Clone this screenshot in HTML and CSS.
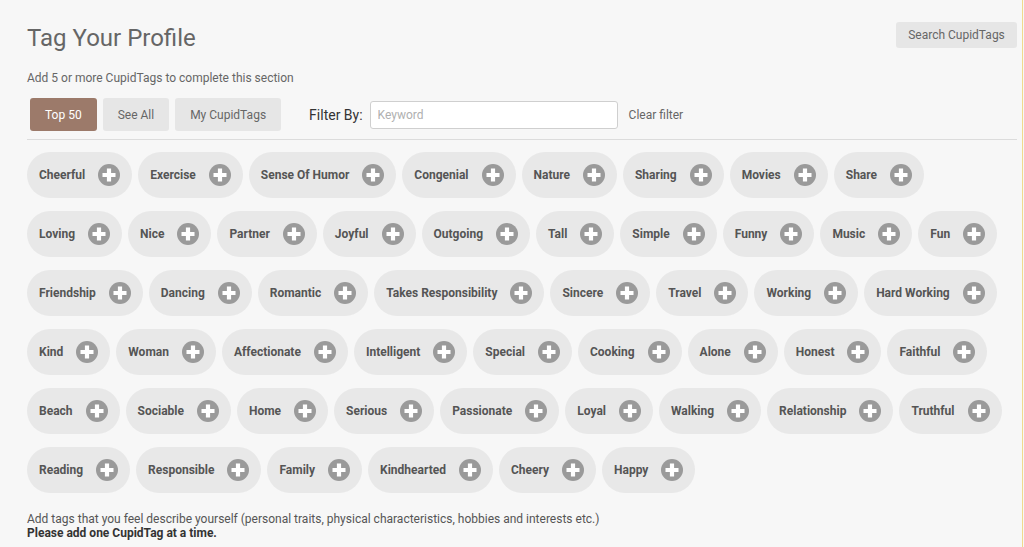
FILE: index.html
```html
<!DOCTYPE html>
<html>
<head>
<meta charset="utf-8">
<link rel="stylesheet" href="styles.css">
</head>
<body>
<div class="page">
  <div class="head">
    <div class="head-text">
      <h1 class="title">Tag Your Profile</h1>
      <p class="sub">Add 5 or more CupidTags to complete this section</p>
    </div>
    <button class="btn btn-search">Search CupidTags</button>
  </div>
  <div class="toolbar">
    <button class="btn btn-tab active">Top 50</button>
    <button class="btn btn-tab">See All</button>
    <button class="btn btn-tab">My CupidTags</button>
    <span class="filter-label">Filter By:</span>
    <input class="filter-input" type="text" placeholder="Keyword">
    <span class="clear">Clear filter</span>
  </div>
  <div class="tags" id="tags"></div>
  <div class="foot">
    <p>Add tags that you feel describe yourself (personal traits, physical characteristics, hobbies and interests etc.)</p>
    <p class="strong">Please add one CupidTag at a time.</p>
  </div>
</div>
<script src="script.js"></script>
</body>
</html>
```
FILE: script.js
```js
var tags = ["Cheerful","Exercise","Sense Of Humor","Congenial","Nature","Sharing","Movies","Share",
"Loving","Nice","Partner","Joyful","Outgoing","Tall","Simple","Funny","Music","Fun",
"Friendship","Dancing","Romantic","Takes Responsibility","Sincere","Travel","Working","Hard Working",
"Kind","Woman","Affectionate","Intelligent","Special","Cooking","Alone","Honest","Faithful",
"Beach","Sociable","Home","Serious","Passionate","Loyal","Walking","Relationship","Truthful",
"Reading","Responsible","Family","Kindhearted","Cheery","Happy"];
var box = document.getElementById('tags');
var icon = '<svg class="plus" width="22" height="22" viewBox="0 0 22 22"><circle cx="11" cy="11" r="11" fill="#9a9a9a"/><path d="M11 4.5V17.5M4.5 11H17.5" stroke="#fff" stroke-width="4.2"/></svg>';
tags.forEach(function(t){
  var d = document.createElement('div');
  d.className = 'tag';
  d.innerHTML = '<span class="tag-name">' + t + '</span>' + icon;
  box.appendChild(d);
});
```
FILE: styles.css
```css
html, body {
  margin: 0;
  padding: 0;
  background: #f7f7f7;
}
body {
  font-family: Roboto, "Liberation Sans", Arial, sans-serif;
  color: #555;
}
.page {
  width: 1023px;
  box-sizing: border-box;
  height: 547px;
  padding: 0 5px 0 27px;
  border-right: 1px solid #f2d98c;
}
.head {
  display: flex;
  justify-content: space-between;
  align-items: flex-start;
}
.title {
  margin: 0;
  padding-top: 23px;
  font-size: 24px;
  line-height: 30px;
  font-weight: 400;
  color: #666;
}
.sub {
  margin: 18px 0 0;
  font-size: 12px;
  line-height: 14px;
  color: #666;
}
.btn {
  font-family: inherit;
  border: none;
  cursor: pointer;
}
.btn-search {
  margin-top: 22px;
  height: 26px;
  width: 121px;
  padding: 0;
  background: #e6e6e6;
  color: #666;
  font-size: 12px;
  border-radius: 3px;
}
.toolbar {
  display: flex;
  align-items: center;
  margin-top: 13px;
  padding: 0 0 8px 3px;
  border-bottom: 1px solid #dcdcdc;
}
.btn-tab {
  height: 33px;
  padding: 0 15px;
  margin-right: 6px;
  background: #e6e6e6;
  color: #666;
  font-size: 12px;
  border-radius: 3px;
}
.btn-tab.active {
  background: #9c7a6a;
  color: #fff;
}
.filter-label {
  margin-left: 22px;
  font-size: 14px;
  color: #333;
}
.filter-input {
  margin-left: 7px;
  width: 248px;
  height: 28px;
  box-sizing: border-box;
  border: 1px solid #cfcfcf;
  border-radius: 3px;
  background: #fff;
  padding: 0 7px;
  font-family: inherit;
  font-size: 12px;
}
.filter-input::placeholder {
  color: #b0b0b0;
}
.clear {
  margin-left: 11px;
  font-size: 12px;
  color: #666;
}
.tags {
  display: flex;
  flex-wrap: wrap;
  gap: 13px 6px;
  padding-top: 12px;
}
.tag {
  display: flex;
  align-items: center;
  height: 46px;
  padding: 0 12px;
  background: #e8e8e8;
  border-radius: 23px;
}
.tag-name {
  font-size: 12px;
  font-weight: 700;
  color: #555;
  margin-right: 13px;
}
.plus {
  display: block;
}
.foot {
  margin-top: 19px;
  font-size: 12px;
  line-height: 14px;
  color: #555;
}
.foot p {
  margin: 0;
}
.foot .strong {
  font-weight: 700;
  color: #333;
}
```
